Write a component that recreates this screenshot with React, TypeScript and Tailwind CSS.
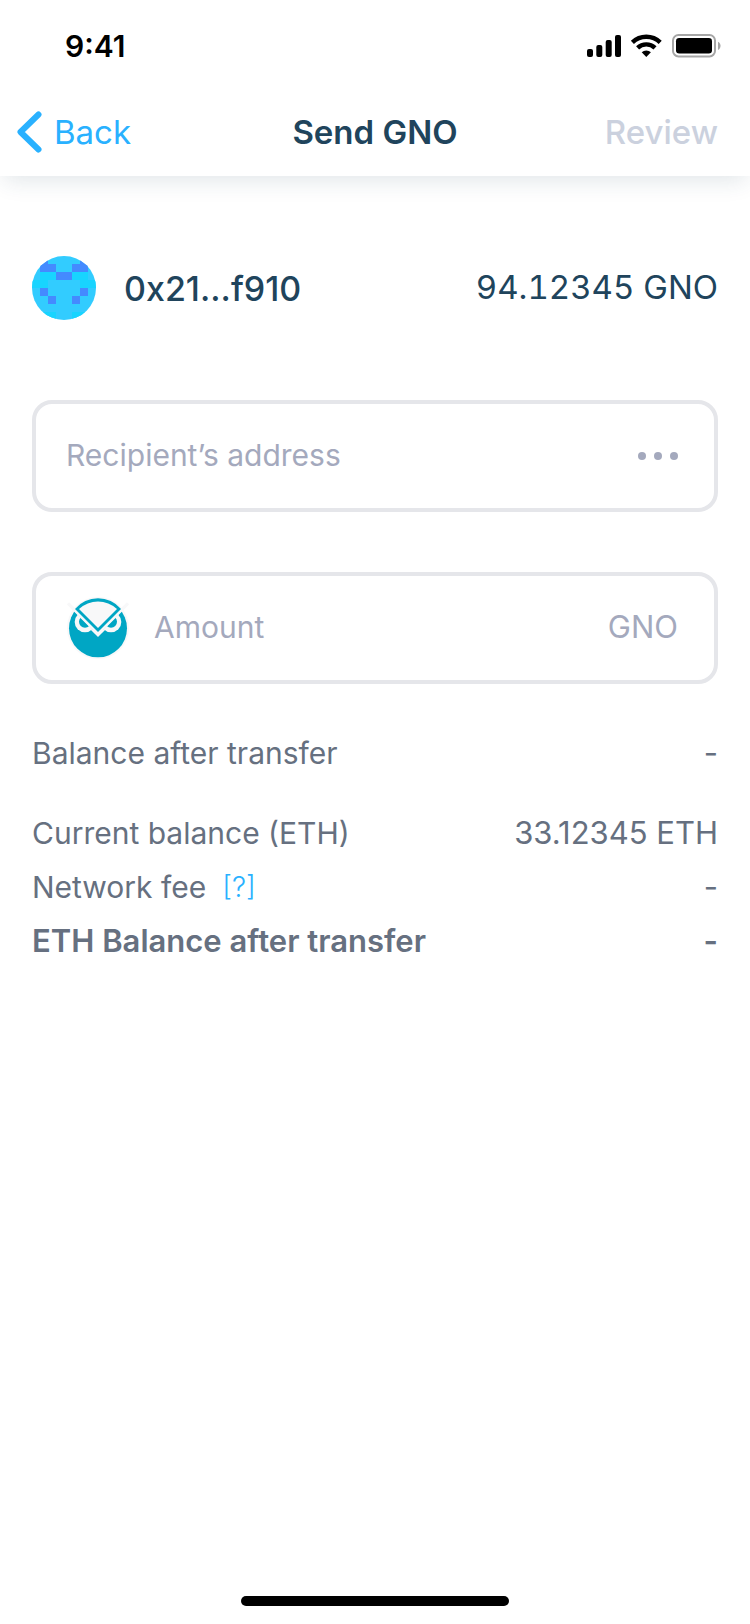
import React from "react";

const IDENTICON = [
  "01000010",
  "01100110",
  "02211220",
  "22000022",
  "01000010",
  "00100100",
  "00000000",
  "22200222",
];

const CELL_COLORS: Record<string, string> = { "1": "#448aff", "2": "#18d4ff" };

function Identicon() {
  return (
    <svg className="size-16 rounded-full bg-[#32ccff]" viewBox="0 0 8 8" shapeRendering="crispEdges" aria-hidden="true">
      {IDENTICON.flatMap((row, y) =>
        row.split("").map((cell, x) =>
          cell === "0" ? null : <rect key={`${x}-${y}`} x={x} y={y} width="1" height="1" fill={CELL_COLORS[cell]} />
        )
      )}
    </svg>
  );
}

function OwlLogo() {
  return (
    <svg className="size-16 shrink-0" viewBox="18 19 192 192" aria-hidden="true">
      <defs>
        <clipPath id="below-brow">
          <path d="M0 21 L114 135 L228 21 V228 H0 Z" />
        </clipPath>
      </defs>
      <circle cx="114" cy="115" r="93" fill="#f8f8f9" />
      <circle cx="114" cy="116" r="87" fill="#00a6c4" />
      <g clipPath="url(#below-brow)">
        <circle cx="75" cy="97" r="31" fill="#f8f8f9" />
        <circle cx="153" cy="97" r="31" fill="#f8f8f9" />
        <circle cx="75" cy="96" r="18" fill="#00a6c4" />
        <circle cx="153" cy="96" r="18" fill="#00a6c4" />
      </g>
      <path d="M92 120 L114 142 L136 120 Z" fill="#f8f8f9" />
      <path d="M24 41 L114 131 L204 41" fill="none" stroke="#f8f8f9" strokeWidth="9" />
      <path d="M45 58 A90 90 0 0 1 183 58 L114 127 Z" fill="#00a6c4" />
      <path d="M57 58 A84 84 0 0 1 171 58 L114 115 Z" fill="#f8f8f9" />
    </svg>
  );
}

function StatusIcons() {
  return (
    <svg className="h-6 w-[134px]" viewBox="0 0 134 24" aria-hidden="true">
      <rect x="0" y="15" width="6" height="8" rx="2" />
      <rect x="9.3" y="11" width="6" height="12" rx="2" />
      <rect x="18.7" y="6" width="6" height="17" rx="2" />
      <rect x="28" y="1" width="6" height="22" rx="2" />
      <g fill="none" stroke="#000" strokeWidth="4.4">
        <path d="M45.4 8.4 A20 20 0 0 1 73.2 8.4" />
        <path d="M50.6 13.9 A12.6 12.6 0 0 1 68 13.9" />
      </g>
      <path d="M59.3 23 L54.7 18.3 A6.6 6.6 0 0 1 63.9 18.3 Z" />
      <rect x="86" y="1" width="42" height="21.4" rx="5.5" fill="none" stroke="#a6a6a6" strokeWidth="2" />
      <rect x="89" y="4" width="36" height="15.4" rx="3.2" />
      <path d="M131 7.7 V16 C134.4 14.5 134.4 9.2 131 7.7 Z" fill="#a6a6a6" />
    </svg>
  );
}

function Row({ label, value, bold = false }: { label: React.ReactNode; value: string; bold?: boolean }) {
  return (
    <div className={bold ? "flex justify-between text-[31px] font-semibold" : "flex justify-between"}>
      <dt>{label}</dt>
      <dd className="text-[31px]">{value}</dd>
    </div>
  );
}

export default function App() {
  return (
    <div className="flex min-h-screen flex-col bg-white font-['Inter',sans-serif] text-[#20445c]">
      <header className="shadow-[0_8px_22px_-4px_rgba(32,68,92,0.14)]">
        <div className="flex h-[90px] items-center justify-between pt-[2px] pr-[29px] pl-[65px] text-black">
          <span className="text-[30px] font-semibold">9:41</span>
          <StatusIcons />
        </div>
        <nav className="grid h-[86px] grid-cols-[1fr_auto_1fr] items-center px-4 pb-[2px] text-[33px] leading-10">
          <button type="button" className="flex items-center gap-3 justify-self-start text-[#29b1ff]">
            <svg className="h-[42px] w-[26px]" viewBox="0 0 26 42" fill="none" stroke="currentColor" strokeWidth="6" strokeLinecap="round" strokeLinejoin="round" aria-hidden="true">
              <path d="M22.5 3.5 L4.5 21 L22.5 38.5" />
            </svg>
            Back
          </button>
          <h1 className="font-semibold">Send GNO</h1>
          <button type="button" disabled className="mr-4 justify-self-end font-medium text-[#cbd1de]">
            Review
          </button>
        </nav>
      </header>

      <main className="flex flex-col px-8 pt-20">
        <section className="flex h-16 items-center">
          <Identicon />
          <span className="ml-7 text-[34px] font-medium">0x21...f910</span>
          <span className="ml-auto text-[33px] tabular-nums">94.12345 GNO</span>
        </section>

        <form className="mt-20 flex flex-col gap-[60px] text-[30px] text-[#a4a9bd]">
          <div className="flex h-28 items-center rounded-[20px] border-4 border-[#e5e6ea] pr-9 pl-[30px]">
            <input
              type="text"
              aria-label="Recipient’s address"
              placeholder="Recipient’s address"
              className="min-w-0 flex-1 bg-transparent pb-[2px] outline-none placeholder:text-[#a4a9bd] placeholder:opacity-100"
            />
            <button type="button" aria-label="More options" className="flex gap-2">
              <span className="size-2 rounded-full bg-current" />
              <span className="size-2 rounded-full bg-current" />
              <span className="size-2 rounded-full bg-current" />
            </button>
          </div>
          <div className="flex h-28 items-center rounded-[20px] border-4 border-[#e5e6ea] pr-9 pl-[30px]">
            <OwlLogo />
            <input
              type="text"
              inputMode="decimal"
              aria-label="Amount"
              placeholder="Amount"
              className="ml-6 min-w-0 flex-1 bg-transparent pb-[2px] outline-none placeholder:text-[#a4a9bd] placeholder:opacity-100"
            />
            <span className="pb-[2px] text-[31px]">GNO</span>
          </div>
        </form>

        <dl className="mt-[42px] flex flex-col text-[30px] leading-[54px] text-[#667080]">
          <Row label="Balance after transfer" value="-" />
          <div className="mt-[26px]">
            <Row label="Current balance (ETH)" value="33.12345 ETH" />
            <Row
              label={
                <span className="flex items-center gap-4">
                  Network fee
                  <a href="#network-fee" className="text-[28px] leading-none font-light text-[#29b1ff]">
                    [?]
                  </a>
                </span>
              }
              value="-"
            />
            <Row label="ETH Balance after transfer" value="-" bold />
          </div>
        </dl>
      </main>

      <footer className="mt-auto flex justify-center pb-[18px]">
        <div className="h-[10px] w-[268px] rounded-full bg-black" />
      </footer>
    </div>
  );
}
